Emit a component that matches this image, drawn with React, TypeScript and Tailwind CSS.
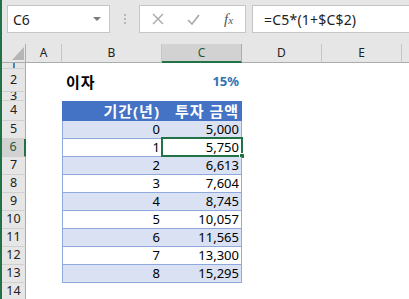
import React from "react";

const cols = [
  { key: "A", w: "w-[36px]" },
  { key: "B", w: "w-[100px]" },
  { key: "C", w: "w-[80px]" },
  { key: "D", w: "w-[80px]" },
  { key: "E", w: "w-[80px]" },
];

const data = [
  { n: 5, year: "0", amount: "5,000" },
  { n: 6, year: "1", amount: "5,750" },
  { n: 7, year: "2", amount: "6,613" },
  { n: 8, year: "3", amount: "7,604" },
  { n: 9, year: "4", amount: "8,745" },
  { n: 10, year: "5", amount: "10,057" },
  { n: 11, year: "6", amount: "11,565" },
  { n: 12, year: "7", amount: "13,300" },
  { n: 13, year: "8", amount: "15,295" },
];

const ui = { fontFamily: '"Noto Sans", "Noto Sans CJK KR", sans-serif' };

function RowHead({ n, h, active }: { n: number; h: string; active?: boolean }) {
  return (
    <div
      className={`${h} w-[24px] shrink-0 flex items-center justify-center overflow-hidden border-b border-[#d0d0d0] text-[12.5px] leading-none ${
        active
          ? "bg-[#d2d2d2] text-[#1e5a37] border-r-2 border-r-[#217346]"
          : "bg-[#e6e6e6] text-[#222] border-r border-r-[#ababab]"
      }`}
    >
      {n}
    </div>
  );
}

function FormulaBar() {
  return (
    <div className="h-[44px] bg-[#e6e6e6] flex items-start pt-[5px] pl-[5px]">
      {/* Name box */}
      <div className="w-[103px] h-[28px] bg-white border border-[#c6c6c6] flex items-center justify-between pl-[5px] pr-[8px]">
        <span className="text-[14px] text-[#222]">C6</span>
        <svg width="8" height="4" viewBox="0 0 8 4">
          <path d="M0 0 L8 0 L4 4 Z" fill="#7a7a7a" />
        </svg>
      </div>
      <div className="w-[29px] h-[28px] flex flex-col items-center justify-center gap-[2px]">
        <span className="w-[2px] h-[2px] bg-[#b8b8b8]" />
        <span className="w-[2px] h-[2px] bg-[#b8b8b8]" />
        <span className="w-[2px] h-[2px] bg-[#b8b8b8]" />
      </div>
      {/* Buttons */}
      <div className="w-[107px] h-[28px] bg-white border border-[#c6c6c6] flex items-center pl-[12px] gap-[23px]">
        <svg width="12" height="12" viewBox="0 0 12 12">
          <path d="M1 1 L11 11 M11 1 L1 11" stroke="#a8a8a8" strokeWidth="1.4" />
        </svg>
        <svg width="13" height="11" viewBox="0 0 13 11">
          <path d="M1 6 L5 10 L12 1" stroke="#a8a8a8" strokeWidth="1.6" fill="none" />
        </svg>
        <span
          className="italic text-[#555] text-[15px] leading-none ml-[1px]"
          style={{ fontFamily: '"Liberation Serif", serif' }}
        >
          f<span className="text-[11px]">x</span>
        </span>
      </div>
      {/* Formula */}
      <div className="ml-[6px] flex-1 h-[28px] bg-white border border-r-0 border-[#c6c6c6] flex items-center pl-[11px]">
        <span className="text-[14px] text-[#222] tracking-[0.2px]">=C5*(1+$C$2)</span>
      </div>
    </div>
  );
}

function ColumnHeader() {
  return (
    <div className="h-[19px] flex bg-[#e6e6e6]">
      <div className="w-[24px] shrink-0 relative border-r border-b border-[#ababab]">
        <svg className="absolute left-[10px] top-[3px]" width="12" height="13" viewBox="0 0 12 13">
          <path d="M12 0 L12 13 L0 13 Z" fill="#b5b5b5" />
        </svg>
      </div>
      {cols.map((c) =>
        c.key === "C" ? (
          <div
            key={c.key}
            className={`${c.w} shrink-0 bg-[#d2d2d2] border-r border-[#ababab] border-b-2 border-b-[#217346] flex items-center justify-center text-[12px] text-[#1e5a37] leading-none pt-[1px]`}
          >
            {c.key}
          </div>
        ) : (
          <div
            key={c.key}
            className={`${c.w} shrink-0 border-r border-[#c6c6c6] border-b border-b-[#ababab] flex items-center justify-center text-[12px] text-[#222] leading-none`}
          >
            {c.key}
          </div>
        )
      )}
      <div className="flex-1 border-b border-[#ababab]" />
    </div>
  );
}

export default function App() {
  return (
    <div className="w-[409px] h-[299px] overflow-hidden bg-white border-l-2 border-[#217346]" style={ui}>
      <FormulaBar />
      <ColumnHeader />

      {/* row 1 */}
      <div className="flex">
        <RowHead n={1} h="h-[6px]" />
      </div>

      {/* row 2 */}
      <div className="flex">
        <RowHead n={2} h="h-[23px]" />
        <div className="w-[36px]" />
        <div className="w-[100px] flex items-end pb-[2px] pl-[4px] text-[15px] font-bold text-black leading-none tracking-[1px]">
          이자
        </div>
        <div className="w-[80px] flex items-end justify-end pb-[4px] pr-[3px] text-[13px] font-bold text-[#2e75b6] leading-none">
          15%
        </div>
      </div>

      {/* row 3 */}
      <div className="flex">
        <RowHead n={3} h="h-[9px]" />
      </div>

      {/* row 4 table header */}
      <div className="flex">
        <RowHead n={4} h="h-[20px]" />
        <div className="w-[36px]" />
        <div className="w-[100px] h-[20px] bg-[#4472c4] flex items-center justify-end pr-[2px] text-[15px] font-bold text-white leading-none tracking-[1px]">
          기간(년)
        </div>
        <div className="w-[80px] h-[20px] bg-[#4472c4] flex items-center justify-end pr-[3px] text-[15px] font-bold text-white leading-none tracking-[1px]">
          투자 금액
        </div>
      </div>

      {data.map((r, i) => {
        const bg = i % 2 === 0 ? "bg-[#d9e1f2]" : "bg-white";
        const active = r.n === 6;
        return (
          <div key={r.n} className="flex">
            <RowHead n={r.n} h="h-[18px]" active={active} />
            <div className="w-[36px]" />
            <div
              className={`w-[100px] h-[18px] ${bg} border-l border-b border-[#8ea9db] flex items-center justify-end pr-[2px] text-[13px] text-black leading-none`}
            >
              {r.year}
            </div>
            <div
              className={`relative w-[80px] h-[18px] ${bg} border-r border-b border-[#8ea9db] flex items-center justify-end pr-[2px] text-[13px] text-black leading-none`}
            >
              {r.amount}
              {active && (
                <div className="absolute -left-[1px] -top-[2px] w-[82px] h-[20px] border-2 border-[#217346]">
                  <div className="absolute -right-[4px] -bottom-[4px] w-[6px] h-[6px] bg-[#217346] border border-white" />
                </div>
              )}
            </div>
          </div>
        );
      })}

      {/* row 14 */}
      <div className="flex">
        <RowHead n={14} h="h-[18px]" />
      </div>
    </div>
  );
}
